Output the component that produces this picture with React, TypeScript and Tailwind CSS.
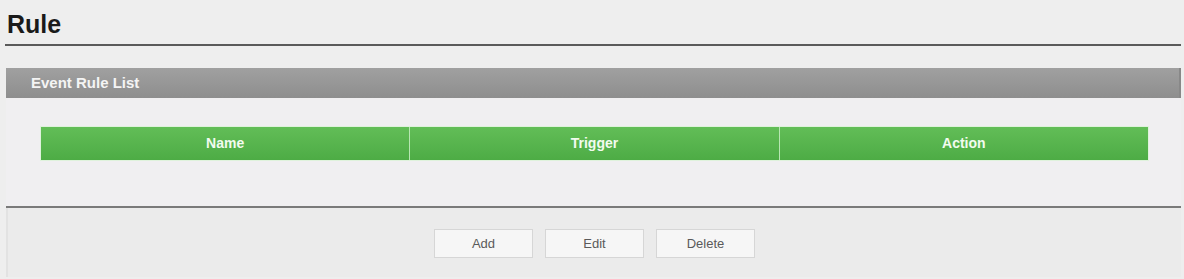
import React from "react";

export default function App() {
  const cols = ["Name", "Trigger", "Action"];
  return (
    <div
      className="w-[1184px] h-[279px] bg-[#eeeeee] pl-[5px] pr-[3px] overflow-hidden"
      style={{ fontFamily: '"Liberation Sans", Arial, sans-serif' }}
    >
      <div className="pt-[12px] pb-[7px] pl-[2px] border-b-2 border-[#5a5a5a]">
        <h1 className="text-[25px] leading-[25px] font-bold text-[#1a1a1a]">Rule</h1>
      </div>
      <div className="mt-[22px] ml-[1px]">
        <div className="h-[30px] flex items-center pl-[25px] bg-gradient-to-b from-[#a0a0a0] to-[#8e8e8e] border-r-2 border-[#888888]">
          <span className="text-[15px] font-bold text-[#f4f4f4]">Event Rule List</span>
        </div>
        <div className="bg-[#f0eff1] pt-[29px] pb-[46px] pl-[35px] pr-[33px]">
          <div className="flex h-[33px] bg-gradient-to-b from-[#62bd57] to-[#4dac45] shadow-[0_0_0_1px_#dff2dc]">
            {cols.map((c, i) => (
              <div
                key={c}
                className={
                  "flex-1 flex items-center justify-center text-[14px] font-bold text-[#f2fbef] " +
                  (i > 0 ? "border-l border-[#b8e6b2]" : "")
                }
              >
                {c}
              </div>
            ))}
          </div>
        </div>
        <div className="h-[2px] bg-[#7a7a7a]" />
        <div className="bg-[#ebebeb] border-l-2 border-[#e2e2e2] h-[69px] pt-[21px] flex justify-center gap-[12px]">
          {["Add", "Edit", "Delete"].map((b) => (
            <button
              key={b}
              className="w-[99px] h-[29px] bg-[#f6f6f6] border border-[#d6d6d6] text-[13px] text-[#5a5a5a]"
            >
              {b}
            </button>
          ))}
        </div>
      </div>
    </div>
  );
}
